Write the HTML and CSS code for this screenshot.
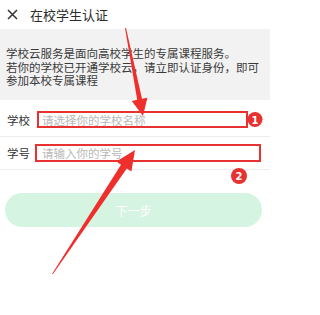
FILE: index.html
```html
<!DOCTYPE html>
<html lang="zh">
<head>
<meta charset="utf-8">
<link rel="stylesheet" href="styles.css">
</head>
<body>
<div class="page">
  <header class="topbar">
    <svg class="close" width="11" height="11" viewBox="0 0 11 11"><path d="M1 1L10 10M10 1L1 10" stroke="#333" stroke-width="1.5" fill="none"/></svg>
    <span class="title">在校学生认证</span>
  </header>
  <section class="intro">
    <p>学校云服务是面向高校学生的专属课程服务。</p>
    <p>若你的学校已开通学校云，请立即认证身份，即可</p>
    <p>参加本校专属课程</p>
  </section>
  <div class="form">
    <div class="row row-first">
      <span class="label">学校</span>
      <span class="placeholder">请选择你的学校名称</span>
    </div>
    <div class="row row-second">
      <span class="label">学号</span>
      <span class="placeholder">请输入你的学号</span>
    </div>
  </div>
  <div class="btn">下一步</div>

  <svg class="overlay" width="270" height="315" viewBox="0 0 270 315">
    <rect x="38" y="112" width="209" height="15" fill="none" stroke="#e8322f" stroke-width="2"/>
    <rect x="36" y="145" width="224" height="16" fill="none" stroke="#e8322f" stroke-width="2"/>
    <circle cx="255" cy="119.5" r="7.5" fill="#e8322f"/>
    <text x="255" y="123.5" class="num">1</text>
    <circle cx="239" cy="176" r="8" fill="#e8322f"/>
    <text x="239" y="180" class="num">2</text>
    <polygon points="125,28 126,28 142,98.8 147.4,97.7 143,116 131.8,100.9 137.2,99.8" fill="#ef2f2c"/>
    <polygon points="52,274 53,274 126.8,168.5 131.4,171.6 135,150 116.4,161.6 121,164.7" fill="#ef2f2c"/>
  </svg>
</div>
</body>
</html>
```
FILE: styles.css
```css
html, body {
  margin: 0;
  padding: 0;
  background: #ffffff;
}
.page {
  position: relative;
  width: 270px;
  height: 315px;
  overflow: hidden;
  font-family: "Noto Sans CJK SC", "Noto Sans", sans-serif;
  color: #333333;
}
.topbar {
  height: 29px;
  display: flex;
  align-items: center;
  padding-left: 7px;
  gap: 12px;
  box-sizing: border-box;
}
.close {
  display: block;
}
.title {
  font-size: 13px;
  line-height: 14px;
  color: #2b2b2b;
}
.intro {
  background: #f2f2f2;
  height: 71px;
  box-sizing: border-box;
  padding: 18px 6px 0 6px;
}
.intro p {
  margin: 0;
  font-size: 11.5px;
  line-height: 13.5px;
  color: #3a3a3a;
  white-space: nowrap;
}
.form {
  display: flex;
  flex-direction: column;
}
.row {
  display: flex;
  align-items: center;
  gap: 12px;
  padding-left: 7px;
  border-bottom: 1px solid #ededed;
  box-sizing: border-box;
  font-size: 11.5px;
}
.row-first {
  height: 37px;
  padding-top: 4px;
}
.row-second {
  height: 33px;
}
.label {
  color: #333333;
}
.placeholder {
  color: #b8b8b8;
}
.btn {
  margin: 23px 0 0 5px;
  width: 257px;
  height: 34px;
  border-radius: 17px;
  background: #d6f4e2;
  color: #ffffff;
  font-size: 12px;
  display: flex;
  align-items: center;
  justify-content: center;
}
.overlay {
  position: absolute;
  left: 0;
  top: 0;
  pointer-events: none;
}
.num {
  font-family: "DejaVu Sans", sans-serif;
  font-size: 10px;
  font-weight: bold;
  fill: #ffffff;
  text-anchor: middle;
}
```
